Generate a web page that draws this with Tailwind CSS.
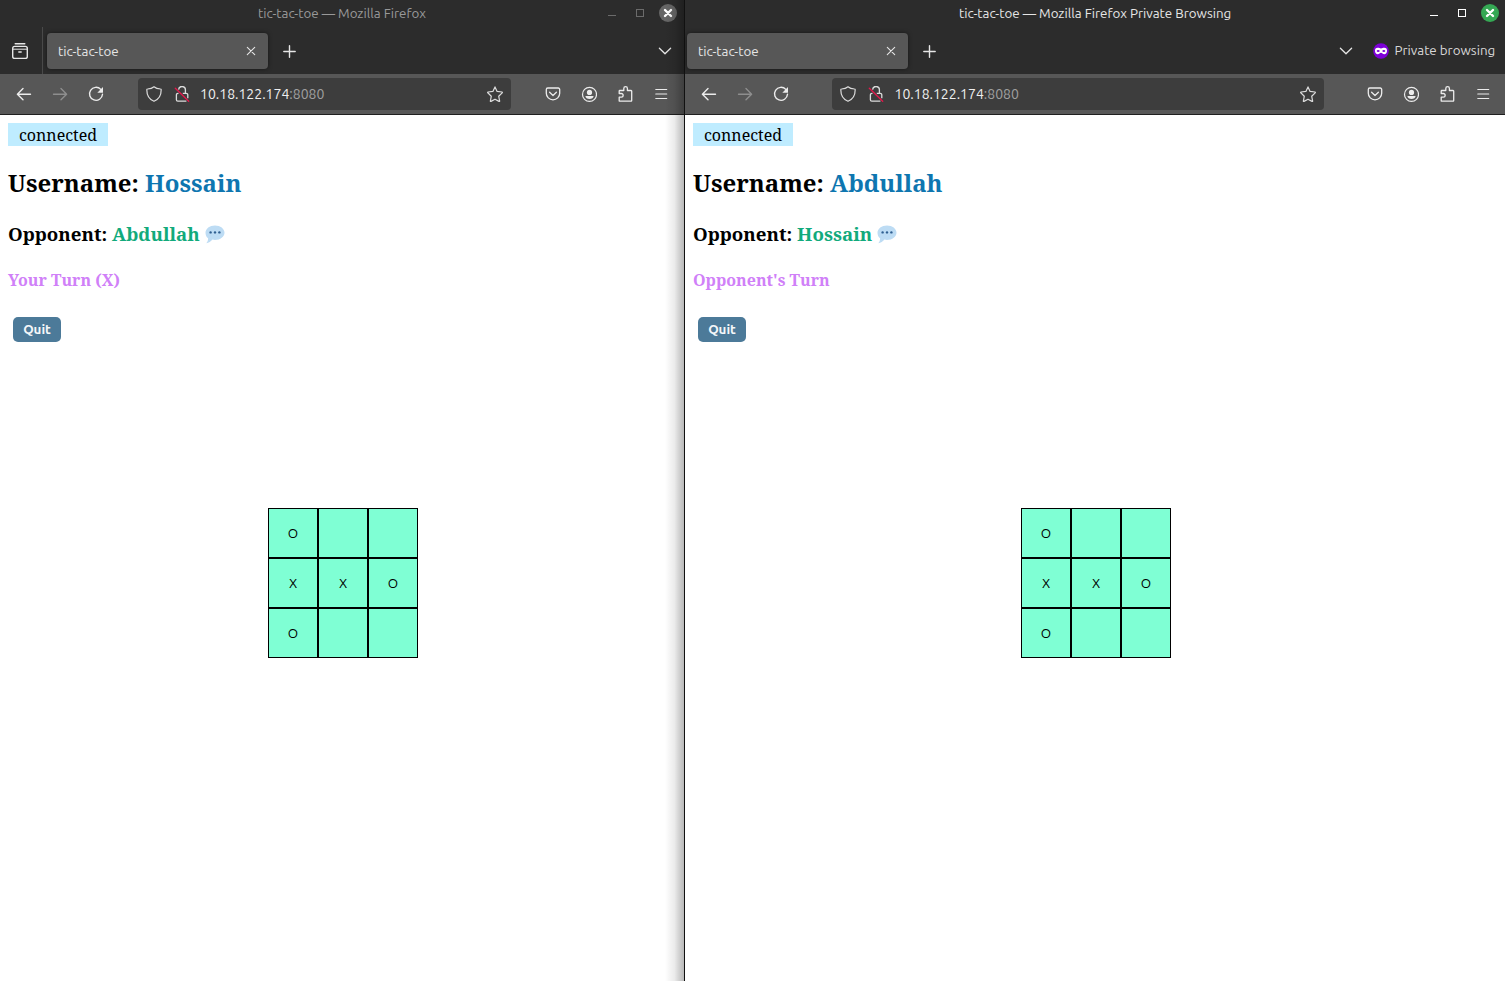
<!DOCTYPE html>
<html lang="en">
<head>
<meta charset="utf-8">
<title>tic-tac-toe</title>
<script src="https://cdn.jsdelivr.net/npm/@tailwindcss/browser@4"></script>
</head>
<body class="w-[1505px] h-[981px] overflow-hidden bg-white">
<svg class="hidden">
  <symbol id="i-view" viewBox="0 0 20 20" fill="none" stroke="currentColor" stroke-width="1.400" stroke-linecap="round"><path d="M5.200 2.800h9.600"/><rect x="2.700" y="5.400" width="14.600" height="12" rx="2"/><path d="M3 8.200h14" stroke-width="1"/><path d="M8.800 11h2.400"/></symbol>
  <symbol id="i-x" viewBox="0 0 10 10" fill="none" stroke="currentColor" stroke-width="1.100" stroke-linecap="round"><path d="M1.300 1.300l7.400 7.400M8.700 1.300L1.300 8.700"/></symbol>
  <symbol id="i-plus" viewBox="0 0 14 14" fill="none" stroke="currentColor" stroke-width="1.400" stroke-linecap="round"><path d="M6.500 1.800v11.400M.8 7.500h11.400"/></symbol>
  <symbol id="i-chev" viewBox="0 0 14 14" fill="none" stroke="currentColor" stroke-width="1.300" stroke-linecap="round" stroke-linejoin="round"><path d="M1.400 4.200L7 9.700l5.600-5.500"/></symbol>
  <symbol id="i-back" viewBox="0 0 16 16" fill="none" stroke="currentColor" stroke-width="1.400" stroke-linecap="round" stroke-linejoin="round"><path d="M14.500 8.200H1.600M7 2.600L1.400 8.200 7 13.800"/></symbol>
  <symbol id="i-fwd" viewBox="0 0 16 16" fill="none" stroke="currentColor" stroke-width="1.400" stroke-linecap="round" stroke-linejoin="round"><path d="M1.500 8.200h12.900M9 2.600L14.600 8.200 9 13.800"/></symbol>
  <symbol id="i-reload" viewBox="0 0 16 16"><path d="M12.800 3.400A6.500 6.500 0 1 0 14.500 8.300" fill="none" stroke="currentColor" stroke-width="1.400" stroke-linecap="round"/><path d="M15 1v5.300a.5.500 0 0 1-.5.500H9.300z" fill="currentColor"/></symbol>
  <symbol id="i-shield" viewBox="0 0 16 16" fill="none" stroke="currentColor" stroke-width="1.200" stroke-linejoin="round"><path d="M8 .8C6.400 2.200 3.800 2.900 1.500 3c-.5 0-.7.400-.7.800C.8 9.200 3.200 13.400 8 15.300c4.800-1.900 7.200-6.100 7.200-11.500 0-.4-.2-.8-.7-.8C12.200 2.900 9.600 2.200 8 .8z"/></symbol>
  <symbol id="i-lock" viewBox="0 0 16 16"><g fill="none" stroke="currentColor" stroke-width="1.300"><path d="M4.600 3.600A3.400 3.400 0 0 1 11.400 4.200v3"/><path d="M4.500 7.300h-.5a1.600 1.600 0 0 0-1.600 1.600v4.900A1.400 1.400 0 0 0 3.800 15.200h8.600M8.800 7.300h3.400a1.600 1.600 0 0 1 1.600 1.600v3.400"/></g><path d="M1.300 2.200l13.400 13" stroke="#e5174b" stroke-width="1.300" stroke-linecap="round"/></symbol>
  <symbol id="i-star" viewBox="0 0 16 16" fill="none" stroke="currentColor" stroke-width="1.200" stroke-linejoin="round"><path d="M8 .9l2.100 4.500 4.900.6c.4.100.5.500.2.800l-3.500 3.400.9 4.800c.1.400-.3.600-.6.400L8 13.200l-4 2.200c-.3.200-.7-.1-.6-.4l.9-4.800L.8 6.800C.5 6.500.6 6.100 1 6l4.900-.6z"/></symbol>
  <symbol id="i-pocket" viewBox="0 0 16 16" fill="none" stroke="currentColor" stroke-width="1.300" stroke-linecap="round" stroke-linejoin="round"><path d="M2.800 2h10.400a1.500 1.500 0 0 1 1.500 1.500V7.300a6.700 6.500 0 0 1-13.400 0V3.500A1.500 1.500 0 0 1 2.800 2z"/><path d="M4.600 6.300L8 9.500l3.400-3.200"/></symbol>
  <symbol id="i-user" viewBox="0 0 16 16"><circle cx="8.500" cy="8.400" r="7" fill="none" stroke="currentColor" stroke-width="1.200"/><circle cx="8.500" cy="6.400" r="2.600" fill="currentColor"/><path d="M4.400 10.100h8.200c0 1.900-2 2.900-4.100 2.900s-4.100-1-4.100-2.900z" fill="currentColor"/></symbol>
  <symbol id="i-ext" viewBox="0 0 16 16" fill="none" stroke="currentColor" stroke-width="1.300" stroke-linejoin="round"><path d="M2.200 15.100V11.200h2.100a1.800 1.800 0 0 0 0-3.700H2.200V5.100a.6.600 0 0 1 .6-.6H6.800V2.500a1.800 1.800 0 0 1 3.600 0V4.500h3.700a.6.600 0 0 1 .6.600v9.400a.6.600 0 0 1-.6.600z"/></symbol>
  <symbol id="i-menu" viewBox="0 0 16 16" fill="none" stroke="currentColor" stroke-width="1.200" stroke-linecap="round"><path d="M2.800 3.500h10.900M2.800 8h10.900M2.800 12.500h10.900"/></symbol>
  <symbol id="i-close" viewBox="0 0 18 18"><path d="M6 6l6 6M12 6l-6 6" stroke="#fff" stroke-width="2.400" stroke-linecap="round"/></symbol>
  <symbol id="i-mask" viewBox="0 0 16 16"><circle cx="8" cy="8" r="7.800" fill="#7d00d8"/><path d="M4.700 4.800C6 4.800 6.800 5.500 8 5.500s2-.7 3.300-.7c2 0 2.700 1.300 2.700 3 0 2-1.200 3.400-2.700 3.400C9.700 11.200 9.200 9.700 8 9.700s-1.700 1.500-3.300 1.500C3.200 11.200 2 9.800 2 7.800c0-1.700.7-3 2.700-3z" fill="#fff"/><ellipse cx="5.200" cy="8" rx="1.500" ry="1" fill="#7d00d8"/><ellipse cx="10.800" cy="8" rx="1.500" ry="1" fill="#7d00d8"/></symbol>
  <symbol id="i-bubble" viewBox="0 0 20 19"><path d="M10 .5c5.300 0 9.500 3.200 9.500 7.200s-4.200 7.200-9.500 7.200c-.9 0-1.700-.1-2.500-.3-1.500 1.900-3.700 3.500-6.300 3.700 1.300-1.200 2-3 1.900-5C1.400 12 .5 9.900.5 7.700.5 3.700 4.700.5 10 .5z" fill="#bddcf4"/><g fill="#2f5f91"><circle cx="5.600" cy="7.400" r="1.200"/><circle cx="10" cy="7.400" r="1.200"/><circle cx="14.400" cy="7.400" r="1.200"/></g></symbol>
</svg>
<div class="flex h-full">

  <section class="relative flex h-full w-[684px] flex-col font-['Ubuntu','Noto_Sans',sans-serif] text-[13.36px]">
    <header class="grid h-[27px] grid-cols-[1fr_auto] bg-[#2c2c2c] text-[#999]">
      <div class="pl-[258px] leading-[27px]"><span class="whitespace-nowrap">tic-tac-toe — Mozilla Firefox</span></div>
      <div class="flex h-[26px] items-center pr-[7px] text-[#6b6b6b]">
        <div class="mt-[5px] mr-5 h-px w-2 bg-[#6b6b6b]"></div>
        <div class="mr-[15px] size-2 border border-[#6b6b6b]"></div>
        <div class="size-[18px] rounded-full bg-[#666]"><svg class="size-[18px]"><use href="#i-close"/></svg></div>
      </div>
    </header>
    <nav class="flex h-[47px] items-center bg-[#2c2c2c] text-[#e6e6e6]">
      <div class="flex h-full w-[43px] items-center border-r border-[#4a4a4a] pl-[10px]"><svg class="size-5"><use href="#i-view"/></svg></div>
      <div class="ml-1 flex h-9 w-[221px] items-center justify-between rounded-[4px] bg-[#575757] pr-3 pl-[11px] shadow-[0_0_4px_rgba(0,0,0,0.5)]"><span class="leading-5 pt-[3px]">tic-tac-toe</span><svg class="size-[10px]"><use href="#i-x"/></svg></div>
      <svg class="ml-[15px] size-[14px]"><use href="#i-plus"/></svg>
      <svg class="mr-3 ml-auto size-[14px]"><use href="#i-chev"/></svg>
    </nav>
    <div class="flex h-[41px] items-center border-b border-[#1f1f1f] bg-[#575757] text-[#ececec]">
      <div class="ml-[6px] flex w-[108px] justify-around"><svg class="size-4"><use href="#i-back"/></svg><svg class="size-4 text-[#8e8e8e]"><use href="#i-fwd"/></svg><svg class="size-4"><use href="#i-reload"/></svg></div>
      <div class="ml-6 flex h-8 w-[373px] items-center rounded-[4px] bg-[#3d3d3d] px-2 text-[#dcdcdc]"><svg class="size-4"><use href="#i-shield"/></svg><svg class="ml-3 size-4"><use href="#i-lock"/></svg><span class="ml-[10px] text-[14px] text-[#f0f0f0]">10.18.122.174<span class="text-[#a0a0a0]">:8080</span></span><svg class="ml-auto size-4"><use href="#i-star"/></svg></div>
      <div class="ml-6 flex w-36 justify-around"><svg class="size-4"><use href="#i-pocket"/></svg><svg class="size-4"><use href="#i-user"/></svg><svg class="size-4"><use href="#i-ext"/></svg><svg class="size-4"><use href="#i-menu"/></svg></div>
    </div>
    <main class="flex grow flex-col items-start bg-white px-2 pt-2 font-['Noto_Serif','Droid_Serif','DejaVu_Serif_Condensed','DejaVu_Serif',serif] text-black">
      <p class="h-[23px] w-[100px] bg-[#bfecff] text-center text-[16px] leading-[24px]">connected</p>
      <h2 class="mt-5 h-[34px] text-[24px] leading-[34px] font-bold whitespace-nowrap">Username: <span class="text-[#0e76b0]">Hossain</span></h2>
      <h3 class="mt-[21px] flex h-[26px] items-center text-[18.72px] leading-[26px] font-bold whitespace-pre">Opponent: <span class="text-[#12aa7c]">Abdullah</span><svg class="ml-[4.800px] h-[19px] w-5"><use href="#i-bubble"/></svg></h3>
      <h4 class="mt-[22px] h-[22px] text-[16px] leading-[22px] font-bold text-[#d080f8]">Your Turn (X)</h4>
      <button class="mt-[26px] ml-[5px] h-[25px] w-12 rounded-[5px] bg-[#4c7a99] font-['Ubuntu','Noto_Sans',sans-serif] text-[13.333px] font-semibold text-[#f4f7f9]">Quit</button>
      <div class="mt-[166px] ml-[260px] grid w-[150px] grid-cols-3 font-['Ubuntu','Noto_Sans',sans-serif] text-[13.333px] *:flex *:h-[50px] *:items-center *:justify-center *:border *:border-black *:bg-[#7fffd4] *:pt-px">
        <div>O</div><div></div><div></div><div>X</div><div>X</div><div>O</div><div>O</div><div></div><div></div>
      </div>
    </main>
    <div class="pointer-events-none absolute inset-y-0 right-0 w-[19px] bg-linear-to-r from-black/0 via-black/8 to-black/28"></div>
  </section>

  <section class="flex h-full w-[821px] flex-col border-l border-[#111] font-['Ubuntu','Noto_Sans',sans-serif] text-[13.36px]">
    <header class="grid h-[27px] grid-cols-[1fr_auto] bg-[#2c2c2c] text-[#e6e6e6]">
      <div class="pl-[274px] leading-[27px]"><span class="whitespace-nowrap">tic-tac-toe — Mozilla Firefox Private Browsing</span></div>
      <div class="flex h-[26px] items-center pr-[6px]">
        <div class="mt-[5px] mr-5 h-px w-2 bg-white"></div>
        <div class="mr-[15px] size-2 border border-white"></div>
        <div class="size-[18px] rounded-full bg-[#35a854]"><svg class="size-[18px]"><use href="#i-close"/></svg></div>
      </div>
    </header>
    <nav class="flex h-[47px] items-center bg-[#2c2c2c] text-[#e6e6e6]">
      <div class="ml-[2px] flex h-9 w-[221px] items-center justify-between rounded-[4px] bg-[#575757] pr-3 pl-[11px] shadow-[0_0_4px_rgba(0,0,0,0.5)]"><span class="leading-5 pt-[3px]">tic-tac-toe</span><svg class="size-[10px]"><use href="#i-x"/></svg></div>
      <svg class="ml-[15px] size-[14px]"><use href="#i-plus"/></svg>
      <svg class="ml-auto size-[14px]"><use href="#i-chev"/></svg>
      <svg class="ml-5 size-4"><use href="#i-mask"/></svg>
      <span class="ml-[5.500px] w-[110.500px] pt-px leading-5 whitespace-nowrap text-[#d8d8d8]">Private browsing</span>
    </nav>
    <div class="flex h-[41px] items-center border-b border-[#1f1f1f] bg-[#575757] text-[#ececec]">
      <div class="ml-[6px] flex w-[108px] justify-around"><svg class="size-4"><use href="#i-back"/></svg><svg class="size-4 text-[#8e8e8e]"><use href="#i-fwd"/></svg><svg class="size-4"><use href="#i-reload"/></svg></div>
      <div class="ml-[33px] flex h-8 w-[492px] items-center rounded-[4px] bg-[#3d3d3d] px-2 text-[#dcdcdc]"><svg class="size-4"><use href="#i-shield"/></svg><svg class="ml-3 size-4"><use href="#i-lock"/></svg><span class="ml-[10.500px] text-[14px] text-[#f0f0f0]">10.18.122.174<span class="text-[#a0a0a0]">:8080</span></span><svg class="ml-auto size-4"><use href="#i-star"/></svg></div>
      <div class="ml-[33px] flex w-36 justify-around"><svg class="size-4"><use href="#i-pocket"/></svg><svg class="size-4"><use href="#i-user"/></svg><svg class="size-4"><use href="#i-ext"/></svg><svg class="size-4"><use href="#i-menu"/></svg></div>
    </div>
    <main class="flex grow flex-col items-start bg-white px-2 pt-2 font-['Noto_Serif','Droid_Serif','DejaVu_Serif_Condensed','DejaVu_Serif',serif] text-black">
      <p class="h-[23px] w-[100px] bg-[#bfecff] text-center text-[16px] leading-[24px]">connected</p>
      <h2 class="mt-5 h-[34px] text-[24px] leading-[34px] font-bold whitespace-nowrap">Username: <span class="text-[#0e76b0]">Abdullah</span></h2>
      <h3 class="mt-[21px] flex h-[26px] items-center text-[18.72px] leading-[26px] font-bold whitespace-pre">Opponent: <span class="text-[#12aa7c]">Hossain</span><svg class="ml-[5px] h-[19px] w-5"><use href="#i-bubble"/></svg></h3>
      <h4 class="mt-[22px] h-[22px] text-[16px] leading-[22px] font-bold text-[#d080f8]">Opponent's Turn</h4>
      <button class="mt-[26px] ml-[5px] h-[25px] w-12 rounded-[5px] bg-[#4c7a99] font-['Ubuntu','Noto_Sans',sans-serif] text-[13.333px] font-semibold text-[#f4f7f9]">Quit</button>
      <div class="mt-[166px] ml-[328px] grid w-[150px] grid-cols-3 font-['Ubuntu','Noto_Sans',sans-serif] text-[13.333px] *:flex *:h-[50px] *:items-center *:justify-center *:border *:border-black *:bg-[#7fffd4] *:pt-px">
        <div>O</div><div></div><div></div><div>X</div><div>X</div><div>O</div><div>O</div><div></div><div></div>
      </div>
    </main>
  </section>
</div>
</body>
</html>
